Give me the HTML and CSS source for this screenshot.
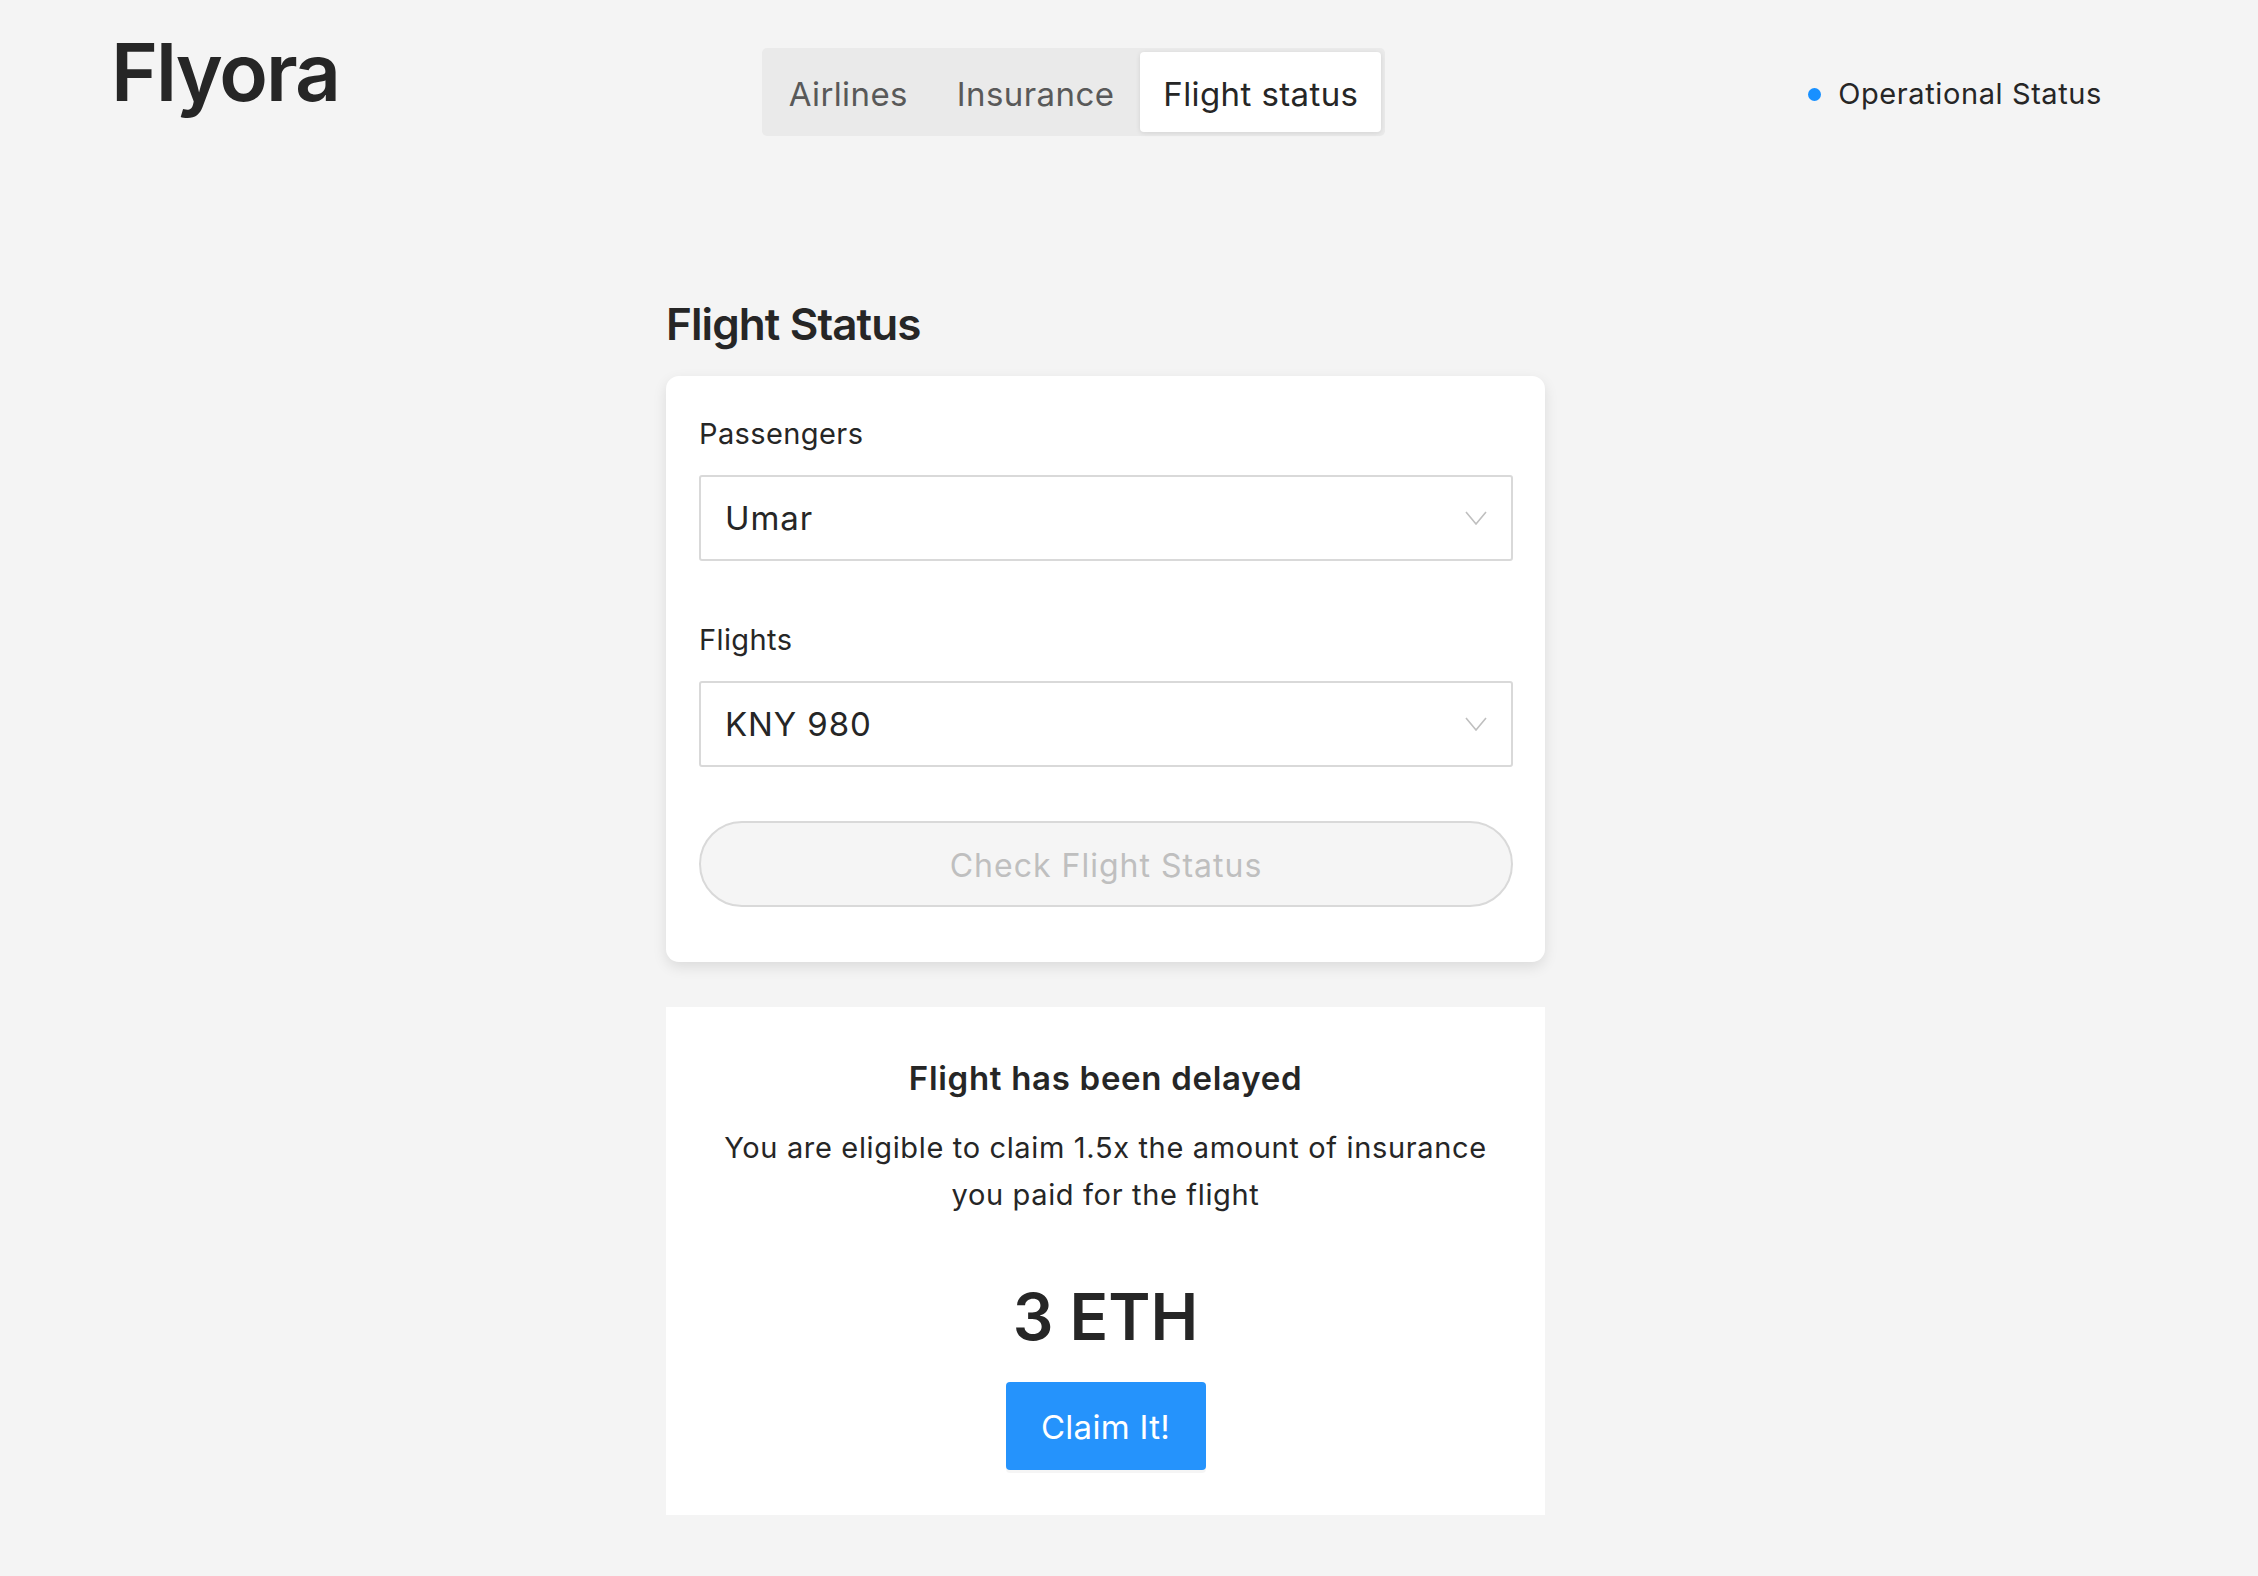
FILE: index.html
```html
<!DOCTYPE html>
<html lang="en">
<head>
<meta charset="utf-8">
<title>Flyora</title>
<link rel="stylesheet" href="styles.css">
</head>
<body>
<header class="topbar">
  <div class="logo">Flyora</div>
  <nav class="tabs">
    <span class="tab">Airlines</span>
    <span class="tab">Insurance</span>
    <span class="tab tab-active">Flight status</span>
  </nav>
  <div class="status">
    <span class="status-dot"></span>
    <span class="status-text">Operational Status</span>
  </div>
</header>

<main class="page">
  <section class="column">
    <h1 class="page-title">Flight Status</h1>
    <div class="card">
      <div class="field">
        <label class="field-label">Passengers</label>
        <div class="select">
          <span class="select-value">Umar</span>
          <svg class="chevron" width="22" height="14" viewBox="0 0 22 14"><polyline points="1,1 11,13 21,1" fill="none" stroke="#bfbfbf" stroke-width="1.6"/></svg>
        </div>
      </div>
      <div class="field">
        <label class="field-label">Flights</label>
        <div class="select">
          <span class="select-value">KNY 980</span>
          <svg class="chevron" width="22" height="14" viewBox="0 0 22 14"><polyline points="1,1 11,13 21,1" fill="none" stroke="#bfbfbf" stroke-width="1.6"/></svg>
        </div>
      </div>
      <button class="check-btn" type="button" disabled>Check Flight Status</button>
    </div>

    <div class="result">
      <h2 class="result-title">Flight has been delayed</h2>
      <p class="result-text">You are eligible to claim 1.5x the amount of insurance you paid for the flight</p>
      <div class="amount">3 ETH</div>
      <button class="claim-btn" type="button">Claim It!</button>
    </div>
  </section>
</main>
</body>
</html>
```

FILE: styles.css
```css
* { box-sizing: border-box; }

html, body {
  margin: 0;
  padding: 0;
  background: #f4f4f4;
}

body {
  font-family: Inter, "Noto Sans", sans-serif;
  color: #262626;
  letter-spacing: 0.6px;
  min-height: 1576px;
}

/* Header */
.topbar {
  display: flex;
  justify-content: space-between;
  align-items: center;
  padding: 48px 156px 0 111px;
}

.logo {
  align-self: flex-start;
  margin-top: -16px;
  font-size: 80px;
  line-height: 1;
  font-weight: 600;
  letter-spacing: -2px;
  color: #262626;
}

.tabs {
  display: flex;
  align-items: stretch;
  gap: 3px;
  height: 88px;
  padding: 4px;
  background: #eaeaea;
  border-radius: 5px;
}

.tab {
  display: flex;
  align-items: center;
  padding: 3px 23px 0;
  font-size: 33px;
  letter-spacing: 0.4px;
  color: #595959;
  border-radius: 4px;
}

.tab-active {
  background: #ffffff;
  color: #262626;
  box-shadow: 0 1px 5px rgba(0, 0, 0, 0.1);
}

.status {
  display: flex;
  align-items: center;
  gap: 17px;
  padding-top: 4px;
}

.status-dot {
  width: 13px;
  height: 13px;
  border-radius: 50%;
  background: #1890ff;
}

.status-text {
  font-size: 29px;
  line-height: 44px;
}

/* Main column */
.page {
  display: flex;
  justify-content: center;
  padding: 160px 47px 0 0;
}

.column {
  width: 879px;
  display: flex;
  flex-direction: column;
}

.page-title {
  margin: 0 0 23px;
  font-size: 44px;
  line-height: 57px;
  font-weight: 600;
  letter-spacing: -0.9px;
}

.card {
  background: #ffffff;
  border-radius: 13px;
  box-shadow: 0 5px 14px rgba(0, 0, 0, 0.1);
  padding: 36px 32px 55px 33px;
  display: flex;
  flex-direction: column;
}

.field {
  display: flex;
  flex-direction: column;
  gap: 19px;
  margin-bottom: 57px;
}

.field + .field {
  margin-bottom: 54px;
}

.field-label {
  font-size: 29px;
  line-height: 44px;
  letter-spacing: 0.4px;
}

.select {
  height: 86px;
  border: 2px solid #d9d9d9;
  border-radius: 3px;
  display: flex;
  align-items: center;
  justify-content: space-between;
  padding: 0 24px 0 24px;
}

.select-value {
  font-size: 33px;
  line-height: 1;
  letter-spacing: 0.9px;
  color: #262626;
}

.chevron {
  display: block;
}

.check-btn {
  height: 86px;
  border: 2px solid #d9d9d9;
  border-radius: 43px;
  background: #f5f5f5;
  color: #bfbfbf;
  font-family: inherit;
  font-size: 32px;
  letter-spacing: 1px;
  padding: 2px 0 0;
}

/* Result panel */
.result {
  margin-top: 45px;
  background: #ffffff;
  padding: 49px 30px 45px;
  display: flex;
  flex-direction: column;
  align-items: center;
  text-align: center;
}

.result-title {
  margin: 0;
  font-size: 33px;
  line-height: 44px;
  font-weight: 600;
  letter-spacing: 0.7px;
}

.result-text {
  margin: 24px 0 0;
  max-width: 800px;
  font-size: 29px;
  line-height: 47px;
  letter-spacing: 0.65px;
}

.amount {
  margin-top: 60px;
  font-size: 64px;
  line-height: 77px;
  font-weight: 600;
  letter-spacing: 0;
}

.claim-btn {
  margin-top: 27px;
  width: 200px;
  height: 88px;
  border: none;
  border-radius: 4px;
  background: #2593fc;
  color: #ffffff;
  font-family: inherit;
  font-size: 33px;
  letter-spacing: 0.3px;
  padding: 2px 0 0;
  box-shadow: 0 3px 0 rgba(0, 0, 0, 0.04);
}
```
